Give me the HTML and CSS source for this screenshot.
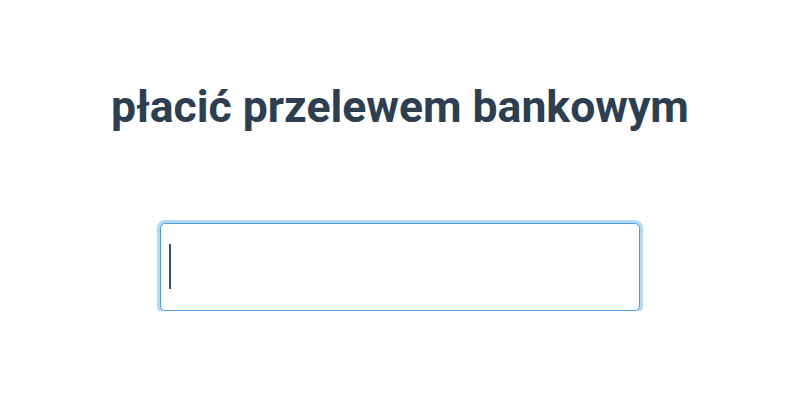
FILE: index.html
```html
<!DOCTYPE html>
<html lang="pl">
<head>
  <meta charset="UTF-8">
  <meta name="viewport" content="width=device-width, initial-scale=1.0">
  <title>płacić przelewem bankowym</title>
  <link rel="stylesheet" href="styles.css">
</head>
<body>
  <div class="card">
    <h1 class="title">płacić przelewem bankowym</h1>
    <div class="field">
      <input class="answer" type="text" autofocus>
      <span class="caret"></span>
    </div>
  </div>
</body>
</html>
```

FILE: styles.css
```css
body {
  font-family: Roboto, "Liberation Sans", sans-serif;
  background-color: #fff;
  margin: 0;
  padding: 0;
}

.card {
  display: flex;
  flex-direction: column;
  align-items: center;
  padding-top: 81px;
}

.title {
  margin: 0;
  font-size: 44.5px;
  font-weight: 700;
  line-height: 52px;
  color: #2c3e50;
}

.field {
  position: relative;
  margin-top: 90px;
}

.answer {
  display: block;
  width: 480px;
  height: 88px;
  box-sizing: border-box;
  padding: 0 10px;
  border: 1px solid #4a9de0;
  border-radius: 5px;
  box-shadow: 0 0 0 3px #b5d9f4;
  font-family: inherit;
  font-size: 40px;
  color: #2c3e50;
  caret-color: transparent;
  outline: none;
}

.caret {
  position: absolute;
  left: 9px;
  top: 21px;
  width: 2px;
  height: 45px;
  background-color: #3d4f62;
}
```
